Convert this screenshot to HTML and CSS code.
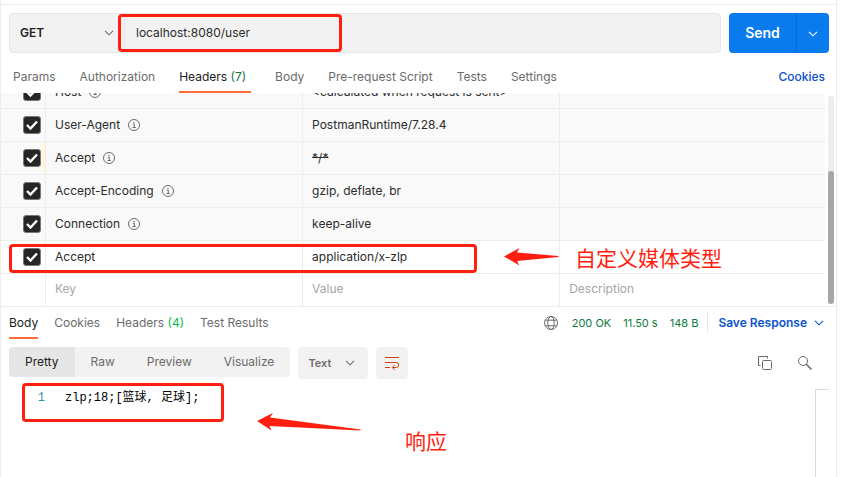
FILE: index.html
```html
<!DOCTYPE html>
<html lang="en">
<head>
<meta charset="utf-8">
<title>localhost:8080/user</title>
<link rel="stylesheet" href="styles.css">
</head>
<body>
<svg class="sprite" aria-hidden="true">
  <symbol id="info" viewBox="0 0 12 12"><circle cx="6" cy="6" r="5.5" fill="none" stroke="currentColor"/><path d="M4.8 5.3H6.3V8.5M4.5 8.5H7.8" fill="none" stroke="currentColor"/><rect x="5.4" y="3" width="1.2" height="1.2" fill="currentColor"/></symbol>
  <symbol id="chevron" viewBox="0 0 10 6"><path d="M1 .8 5 4.8 9 .8" fill="none" stroke="currentColor" stroke-width="1.1"/></symbol>
</svg>
<main class="panel">
  <section class="request">
    <form class="request-bar">
      <div class="address">
        <label class="method">
          <select aria-label="Method"><option>GET</option></select>
          <svg class="chevron"><use href="#chevron"/></svg>
        </label>
        <input class="url" type="text" aria-label="Request URL" value="localhost:8080/user">
        <span class="mark mark-url"></span>
      </div>
      <div class="send">
        <button type="button" class="send-main">Send</button>
        <button type="button" class="send-more" aria-label="Send options"><svg class="chevron"><use href="#chevron"/></svg></button>
      </div>
    </form>
    <nav class="tabs request-tabs">
      <a href="#">Params</a>
      <a href="#">Authorization</a>
      <a href="#" class="active wide">Headers <span class="count">(7)</span></a>
      <a href="#">Body</a>
      <a href="#">Pre-request Script</a>
      <a href="#">Tests</a>
      <a href="#">Settings</a>
      <a href="#" class="cookies">Cookies</a>
    </nav>
  </section>

  <section class="headers">
    <div class="scroller">
      <table>
        <colgroup><col class="col-check"><col class="col-key"><col class="col-key"><col></colgroup>
        <tbody>
          <tr class="auto"><td><input type="checkbox" checked aria-label="Host"></td><td>Host<svg class="info"><use href="#info"/></svg></td><td>&lt;calculated when request is sent&gt;</td><td></td></tr>
          <tr class="auto"><td><input type="checkbox" checked aria-label="User-Agent"></td><td>User-Agent<svg class="info"><use href="#info"/></svg></td><td>PostmanRuntime/7.28.4</td><td></td></tr>
          <tr class="auto overridden"><td><input type="checkbox" checked aria-label="Default Accept"></td><td>Accept<svg class="info"><use href="#info"/></svg></td><td><s>*/*</s></td><td></td></tr>
          <tr class="auto"><td><input type="checkbox" checked aria-label="Accept-Encoding"></td><td>Accept-Encoding<svg class="info"><use href="#info"/></svg></td><td>gzip, deflate, br</td><td></td></tr>
          <tr class="auto"><td><input type="checkbox" checked aria-label="Connection"></td><td>Connection<svg class="info"><use href="#info"/></svg></td><td>keep-alive</td><td></td></tr>
          <tr><td><input type="checkbox" checked aria-label="Accept"></td><td>Accept</td><td>application/x-zlp</td><td></td></tr>
          <tr class="new"><td></td><td><input type="text" aria-label="Key" placeholder="Key"></td><td><input type="text" aria-label="Value" placeholder="Value"></td><td><input type="text" aria-label="Description" placeholder="Description"></td></tr>
        </tbody>
      </table>
    </div>
    <div class="scrollbar"><div class="thumb"></div></div>
    <span class="mark mark-header"></span>
    <div class="note note-header">
      <svg width="56" height="18" viewBox="0 0 56 18"><path d="M0 8.5 15.5 0 13 4.5 54.5 8 54.5 9 13 13 15.5 17.5Z"/></svg>
      <span lang="zh">自定义媒体类型</span>
    </div>
  </section>

  <section class="response">
    <div class="response-head">
      <nav class="tabs">
        <a href="#" class="active">Body</a>
        <a href="#">Cookies</a>
        <a href="#">Headers <span class="count bright">(4)</span></a>
        <a href="#">Test Results</a>
      </nav>
      <div class="status">
        <svg class="globe" width="14" height="14" viewBox="0 0 14 14" fill="none" stroke="currentColor"><circle cx="7" cy="7" r="6.5"/><ellipse cx="7" cy="7" rx="3.2" ry="6.5"/><path d="M1.3 4.2H12.7M1.3 9.8H12.7"/></svg>
        <span>200 OK</span><span>11.50 s</span><span>148 B</span>
      </div>
      <button type="button" class="save">Save Response<svg class="chevron"><use href="#chevron"/></svg></button>
    </div>
    <div class="toolbar">
      <div class="views">
        <button type="button" class="current">Pretty</button><button type="button">Raw</button><button type="button">Preview</button><button type="button">Visualize</button>
      </div>
      <label class="format">
        <select aria-label="Format"><option>Text</option></select>
        <svg class="chevron"><use href="#chevron"/></svg>
      </label>
      <button type="button" class="wrap" aria-label="Wrap lines"><svg width="16" height="14" viewBox="0 0 16 14" fill="none" stroke="currentColor"><path d="M1 1.5H15M1 6.5H12.2A2.5 2.5 0 0 1 12.2 11.5H8.5M1 11.5H6M10.8 9 8.3 11.5 10.8 14"/></svg></button>
      <div class="tools">
        <button type="button" aria-label="Copy"><svg width="16" height="16" viewBox="0 0 16 16" fill="none" stroke="currentColor"><path d="M3.5 10.5H1.5V1.5H10.5V3.5"/><rect x="5.5" y="5.5" width="9" height="9" rx="1"/></svg></button>
        <button type="button" aria-label="Search"><svg width="16" height="16" viewBox="0 0 16 16" fill="none" stroke="currentColor"><circle cx="6" cy="6" r="4.5"/><path d="M9.3 9.3 14.5 14.5" stroke-width="1.6"/></svg></button>
      </div>
    </div>
    <div class="editor">
      <div class="line"><span class="number">1</span><code>zlp;18;[篮球, 足球];</code></div>
      <div class="ruler"></div>
      <span class="mark mark-body"></span>
      <div class="note note-body">
        <svg width="106" height="20" viewBox="0 0 106 20"><path d="M0 8 16 0 13 4.500 103.500 16.500 103.500 17.500 12.500 13 14.500 17.500Z"/></svg>
        <span lang="zh">响应</span>
      </div>
    </div>
  </section>
</main>
</body>
</html>
```
FILE: styles.css
```css
* { box-sizing: border-box; }

body {
  margin: 0;
  background: #fff;
  color: #2b2b2b;
  font: 12px/16px Inter, "Noto Sans CJK SC", sans-serif;
}

button, input, select {
  margin: 0;
  padding: 0;
  border: 0;
  background: none;
  color: inherit;
  font: inherit;
}

select { appearance: none; }
a { color: inherit; text-decoration: none; }
svg { flex: none; }
.sprite { position: absolute; width: 0; height: 0; }
.chevron { width: 10px; height: 6px; }

.panel {
  display: flex;
  flex-direction: column;
  min-height: 100vh;
  margin-right: 18px;
  padding-top: 4px;
  border: solid #ededed;
  border-width: 0 1px;
}

/* Request */
.request { border-top: 1px solid #ededed; }

.request-bar {
  display: flex;
  gap: 8px;
  padding: 8px 7px 0 8px;
}

.address {
  position: relative;
  display: flex;
  flex: 1;
  height: 40px;
  border: 1px solid #e6e6e6;
  border-radius: 4px;
  background: #f2f2f2;
}

.method {
  display: flex;
  align-items: center;
  width: 115px;
  padding: 0 10px;
  border-right: 1px solid #e6e6e6;
  color: #6b6b6b;
}

.method select { flex: 1; color: #212121; font-weight: 600; }
.url { flex: 1; padding: 0 11px; }

.send {
  display: flex;
  width: 100px;
  border-radius: 4px;
  background: #097bed;
  color: #fff;
}

.send-main { flex: 1; font-size: 14px; font-weight: 600; }
.send-more { width: 33px; border-left: 1px solid #0a6bd0; }

.tabs { display: flex; gap: 16px; color: #6b6b6b; }
.tabs a { padding-bottom: 6px; border-bottom: 2px solid transparent; white-space: nowrap; }
.tabs .active { border-color: #ff6c37; color: #212121; }
.tabs .wide { padding-right: 5px; }
.request-tabs { gap: 24px; padding: 16px 11px 0 12px; }
.tabs .cookies { margin-left: auto; color: #0b53cc; font-weight: 500; }
.count { color: #0e7a40; }
.count.bright { color: #0cbb52; }

/* Header table */
.headers {
  position: relative;
  display: flex;
  gap: 3px;
  padding-right: 2px;
  border-bottom: 1px solid #ededed;
}

.scroller {
  display: flex;
  flex: 1;
  align-items: flex-end;
  height: 213px;
  overflow: hidden;
}

table {
  width: 100%;
  table-layout: fixed;
  border-spacing: 0;
}

.col-check { width: 45px; }
.col-key { width: 31.2%; }

td {
  height: 33px;
  padding: 0 9px;
  border: solid #ededed;
  border-width: 0 1px 1px 0;
}

td:first-child { padding: 0 4px 0 0; text-align: right; }
td:last-child { border-right: 0; }
.auto td { background: #f9f9f9; }
.overridden td:first-child { box-shadow: inset -3px 0 #fff7d6; }
.new td { height: 32px; padding-bottom: 2px; border-bottom: 0; }
.new input { display: block; width: 100%; }
::placeholder { color: #a6a6a6; opacity: 1; }

input[type="checkbox"] {
  display: inline-block;
  width: 18px;
  height: 18px;
  border: 1px solid #777;
  border-radius: 3px;
  appearance: none;
  vertical-align: middle;
}

input[type="checkbox"]:checked {
  background: #262626 url("data:image/svg+xml,%3Csvg xmlns='http://www.w3.org/2000/svg' viewBox='0 0 16 16'%3E%3Cpath d='M3 8 6.500 11.500 13 4.500' fill='none' stroke='white' stroke-width='2.400'/%3E%3C/svg%3E") center / 16px;
}

.info {
  width: 12px;
  height: 12px;
  margin-left: 8px;
  color: #6b6b6b;
  vertical-align: -2px;
}

.scrollbar {
  display: flex;
  flex-direction: column;
  justify-content: flex-end;
  width: 6px;
  margin: 3px 0 2px;
  border-radius: 3px;
  background: #ededed;
}

.thumb { height: 64%; border-radius: 3px; background: #a6a6a6; }

/* Response */
.response { display: flex; flex: 1; flex-direction: column; padding: 8px 7px 0 8px; }
.response-head { display: flex; align-items: flex-start; }
.status { display: flex; gap: 12px; margin-left: auto; color: #0e7a40; font-size: 11px; }
.globe { margin: 1px 2px 0 0; color: #6b6b6b; }

.save {
  display: flex;
  align-items: center;
  gap: 7px;
  height: 20px;
  margin: -2px 5px 0 9px;
  padding-left: 10px;
  border-left: 1px solid #e6e6e6;
  color: #0b53cc;
  font-weight: 600;
}

.toolbar { display: flex; gap: 8px; margin-top: 8px; color: #6b6b6b; }
.views { display: flex; height: 30px; overflow: hidden; border-radius: 4px; background: #f2f2f2; }
.views button { padding: 0 16px; }
.views .current { background: #e6e6e6; color: #212121; }

.format {
  display: flex;
  align-items: center;
  width: 70px;
  height: 32px;
  padding: 0 13px 0 10px;
  border-radius: 4px;
  background: #f2f2f2;
}

.format select { flex: 1; min-width: 0; font-size: 11px; font-weight: 600; }
.wrap { display: grid; place-items: center; width: 32px; border-radius: 4px; background: #f2f2f2; color: #d1410c; }
.tools { display: flex; gap: 24px; margin: 0 16px 0 auto; }
.tools button { display: grid; place-items: center; width: 16px; }

.editor { position: relative; display: flex; flex: 1; margin-top: 10px; }
.line { display: flex; flex: 1; height: 18px; color: #000; font: 12px/18px "Liberation Mono", "Noto Sans CJK SC", monospace; }
.line code { font: inherit; }
.number { width: 56px; padding-right: 20px; color: #2b91af; text-align: right; }
.ruler { width: 14px; border: solid #dcdcdc; border-width: 1px 0 0 1px; }

/* Annotations */
.mark { position: absolute; border: 3px solid #ff1e10; border-radius: 4px; pointer-events: none; }
.mark-url { top: 0; left: 108px; width: 224px; height: 38px; }
.mark-header { bottom: 33px; left: 8px; width: 468px; height: 29px; }
.mark-body { top: -6px; left: 13px; width: 202px; height: 39px; }

.note { position: absolute; display: flex; color: #ff1e10; font: 21px/28px "Noto Sans CJK SC", sans-serif; }
.note svg { fill: currentColor; }
.note-header { bottom: 35px; left: 503px; align-items: center; gap: 15px; }
.note-body { top: 23px; left: 248px; gap: 42px; }
.note-body svg { margin-top: 1px; }
.note-body span { margin-top: 14px; }
```
